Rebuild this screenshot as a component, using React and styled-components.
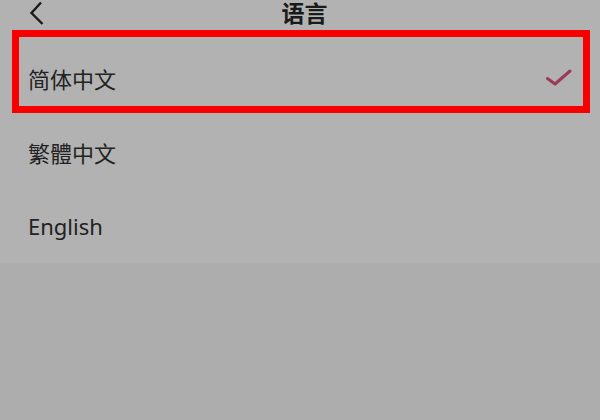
import React from "react";
import styled, { createGlobalStyle } from "styled-components";

const GlobalStyle = createGlobalStyle`
  html, body {
    margin: 0;
    padding: 0;
    background: #adadad;
  }
  body {
    font-family: "Noto Sans", "Noto Sans CJK SC", sans-serif;
  }
`;

const Screen = styled.div`
  position: relative;
  width: 600px;
  height: 420px;
  overflow: hidden;
  display: flex;
  flex-direction: column;
  background: #adadad;
`;

const Panel = styled.div`
  display: flex;
  flex-direction: column;
  background: #b2b2b2;
`;

const Header = styled.div`
  height: 41px;
  display: grid;
  grid-template-columns: 1fr auto 1fr;
  align-items: start;
  padding: 0 20px 0 29px;
`;

const BackButton = styled.button`
  justify-self: start;
  width: 20px;
  height: 26px;
  padding: 0;
  border: none;
  background: none;
  display: flex;
  align-items: center;
  justify-content: flex-start;
  color: #1a1a1a;
  cursor: pointer;
`;

const Title = styled.h1`
  margin: 0;
  font-family: "Noto Sans CJK SC", sans-serif;
  font-size: 23px;
  font-weight: 700;
  line-height: 23px;
  padding-top: 1px;
  color: #1a1a1a;
`;

const List = styled.ul`
  list-style: none;
  margin: 0;
  padding: 0;
`;

const Row = styled.li`
  height: 74px;
  display: flex;
  align-items: center;
  justify-content: space-between;
  padding: 0 27px 0 28px;
  font-size: 22px;
  color: #222;
  font-family: ${(p) =>
    p.$latin ? '"Noto Sans", sans-serif' : '"Noto Sans CJK SC", sans-serif'};
`;

const Highlight = styled.div`
  position: absolute;
  top: 30px;
  left: 12px;
  width: 578px;
  height: 83px;
  box-sizing: border-box;
  border: 7px solid #f60000;
  pointer-events: none;
`;

const languages = [
  { key: "zh-CN", label: "简体中文", selected: true },
  { key: "zh-TW", label: "繁體中文" },
  { key: "en", label: "English", latin: true },
];

function Check() {
  return (
    <svg width="28" height="20" viewBox="0 0 28 20" style={{ marginTop: 2 }}>
      <path
        d="M2.5 9.5 L10 15 L25 2"
        fill="none"
        stroke="#9b3a56"
        strokeWidth="3"
        strokeLinecap="round"
        strokeLinejoin="round"
      />
    </svg>
  );
}

export default function App() {
  return (
    <Screen>
      <GlobalStyle />
      <Panel>
        <Header>
          <BackButton aria-label="back">
            <svg width="15" height="24" viewBox="0 0 15 24">
              <path
                d="M12 1.5 L2.5 12 L13.5 23"
                fill="none"
                stroke="currentColor"
                strokeWidth="2.4"
              />
            </svg>
          </BackButton>
          <Title>语言</Title>
          <span />
        </Header>
        <List>
          {languages.map((l) => (
            <Row key={l.key} $latin={l.latin}>
              <span>{l.label}</span>
              {l.selected && <Check />}
            </Row>
          ))}
        </List>
      </Panel>
      <Highlight />
    </Screen>
  );
}
